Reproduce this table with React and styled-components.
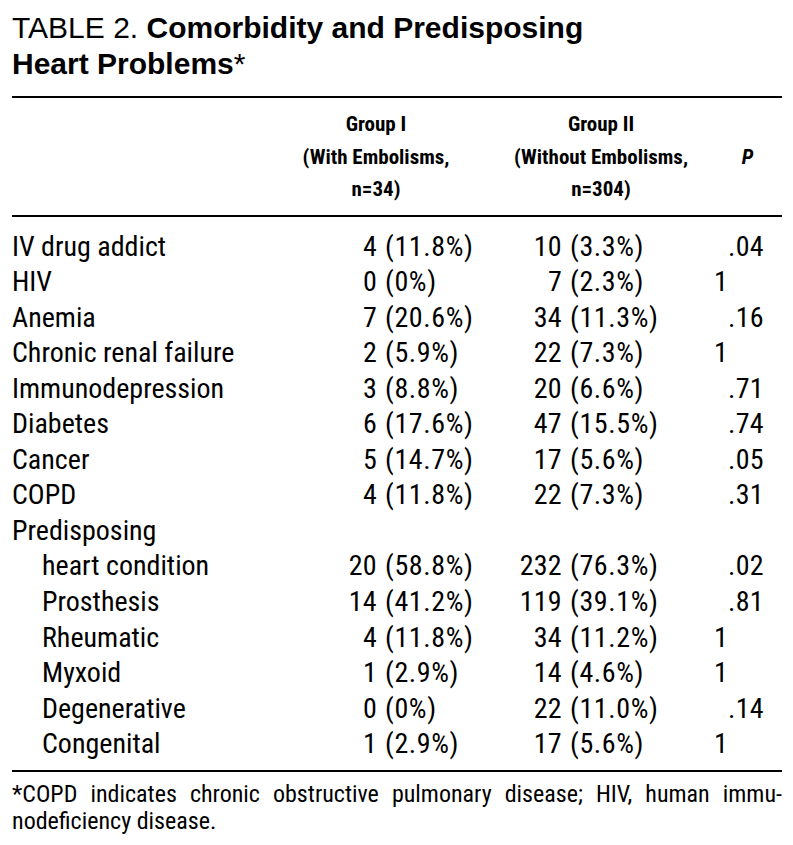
import React, { Component } from 'react'
import styled, { createGlobalStyle } from 'styled-components'

const GlobalStyle = createGlobalStyle`
  body {
    margin: 0;
    background: #fff;
    color: #000;
  }
`;

const condensed = `"Roboto Condensed", Roboto, "Liberation Sans", sans-serif`;

const Page = styled.div`
  width: 793px;
  box-sizing: border-box;
  padding: 10px 11px 0 12px;
`;

const Title = styled.h1`
  margin: 0;
  font-family: "Liberation Sans", Arial, sans-serif;
  font-weight: normal;
  font-size: 30px;
  line-height: 36px;
  width: 600px;
`;

const TitleBold = styled.b`
  font-weight: bold;
`;

const Rule = styled.div`
  height: 2px;
  background: #000;
  margin-top: ${props => props.top || 0}px;
`;

const Header = styled.div`
  display: grid;
  grid-template-columns: 284px 160px 35px 220px 1fr;
  align-items: center;
  padding: 10px 0 9px;
  font-family: ${condensed};
  font-stretch: condensed;
  font-weight: bold;
  font-size: 21px;
  line-height: 32.5px;
`;

const HeadCell = styled.div`
  grid-column: ${props => props.col};
  text-align: center;
  white-space: nowrap;
`;

const PHead = styled.div`
  grid-column: 5;
  text-align: center;
  font-style: italic;
  padding-left: 2px;
`;

const Body = styled.div`
  padding: 12px 0 8px;
  font-family: ${condensed};
  font-stretch: condensed;
  font-size: 28px;
`;

const Row = styled.div`
  display: grid;
  grid-template-columns: 288px 77px 113px 72px 118px 48px 1fr;
  height: 35.55px;
  line-height: 35.55px;
  white-space: nowrap;
`;

const Label = styled.div`
  padding-left: ${props => props.indent ? 30 : 0}px;
`;

const Num = styled.div`
  text-align: right;
  letter-spacing: 0.3px;
`;

const Pct = styled.div`
  text-align: left;
  padding-left: 8px;
  letter-spacing: 0.6px;
`;

const Frac = styled.div`
  letter-spacing: 0.3px;
`;

const Footnote = styled.div`
  padding-top: 9px;
  font-family: ${condensed};
  font-stretch: condensed;
  font-size: 24px;
  line-height: 27px;
`;

const FootLine = styled.span`
  display: block;
  white-space: nowrap;
  text-align: ${props => props.justify ? 'justify' : 'left'};
  text-align-last: ${props => props.justify ? 'justify' : 'left'};
`;

const rows = [
  { label: 'IV drug addict', g1: ['4', '(11.8%)'], g2: ['10', '(3.3%)'], p: ['', '.04'] },
  { label: 'HIV', g1: ['0', '(0%)'], g2: ['7', '(2.3%)'], p: ['1', ''] },
  { label: 'Anemia', g1: ['7', '(20.6%)'], g2: ['34', '(11.3%)'], p: ['', '.16'] },
  { label: 'Chronic renal failure', g1: ['2', '(5.9%)'], g2: ['22', '(7.3%)'], p: ['1', ''] },
  { label: 'Immunodepression', g1: ['3', '(8.8%)'], g2: ['20', '(6.6%)'], p: ['', '.71'] },
  { label: 'Diabetes', g1: ['6', '(17.6%)'], g2: ['47', '(15.5%)'], p: ['', '.74'] },
  { label: 'Cancer', g1: ['5', '(14.7%)'], g2: ['17', '(5.6%)'], p: ['', '.05'] },
  { label: 'COPD', g1: ['4', '(11.8%)'], g2: ['22', '(7.3%)'], p: ['', '.31'] },
  { label: 'Predisposing' },
  { label: 'heart condition', indent: true, g1: ['20', '(58.8%)'], g2: ['232', '(76.3%)'], p: ['', '.02'] },
  { label: 'Prosthesis', indent: true, g1: ['14', '(41.2%)'], g2: ['119', '(39.1%)'], p: ['', '.81'] },
  { label: 'Rheumatic', indent: true, g1: ['4', '(11.8%)'], g2: ['34', '(11.2%)'], p: ['1', ''] },
  { label: 'Myxoid', indent: true, g1: ['1', '(2.9%)'], g2: ['14', '(4.6%)'], p: ['1', ''] },
  { label: 'Degenerative', indent: true, g1: ['0', '(0%)'], g2: ['22', '(11.0%)'], p: ['', '.14'] },
  { label: 'Congenital', indent: true, g1: ['1', '(2.9%)'], g2: ['17', '(5.6%)'], p: ['1', ''] },
];

export class App extends Component {
  render() {
    const tableRows = rows.map(row => {
      const g1 = row.g1 || ['', ''];
      const g2 = row.g2 || ['', ''];
      const p = row.p || ['', ''];
      return (
        <Row key={row.label}>
          <Label indent={row.indent}>{row.label}</Label>
          <Num>{g1[0]}</Num>
          <Pct>{g1[1]}</Pct>
          <Num>{g2[0]}</Num>
          <Pct>{g2[1]}</Pct>
          <Num>{p[0]}</Num>
          <Frac>{p[1]}</Frac>
        </Row>
      )
    })
    return (
      <Page>
        <GlobalStyle />
        <Title>
          TABLE 2. <TitleBold>Comorbidity and Predisposing Heart Problems</TitleBold>*
        </Title>
        <Rule top={14} />
        <Header>
          <HeadCell col={2}>Group I<br/>(With Embolisms,<br/>n=34)</HeadCell>
          <HeadCell col={4}>Group II<br/>(Without Embolisms,<br/>n=304)</HeadCell>
          <PHead>P</PHead>
        </Header>
        <Rule />
        <Body>
          {tableRows}
        </Body>
        <Rule />
        <Footnote>
          <FootLine justify>*COPD indicates chronic obstructive pulmonary disease; HIV, human immu-</FootLine>
          <FootLine>nodeficiency disease.</FootLine>
        </Footnote>
      </Page>
    )
  }
}

export default App;
